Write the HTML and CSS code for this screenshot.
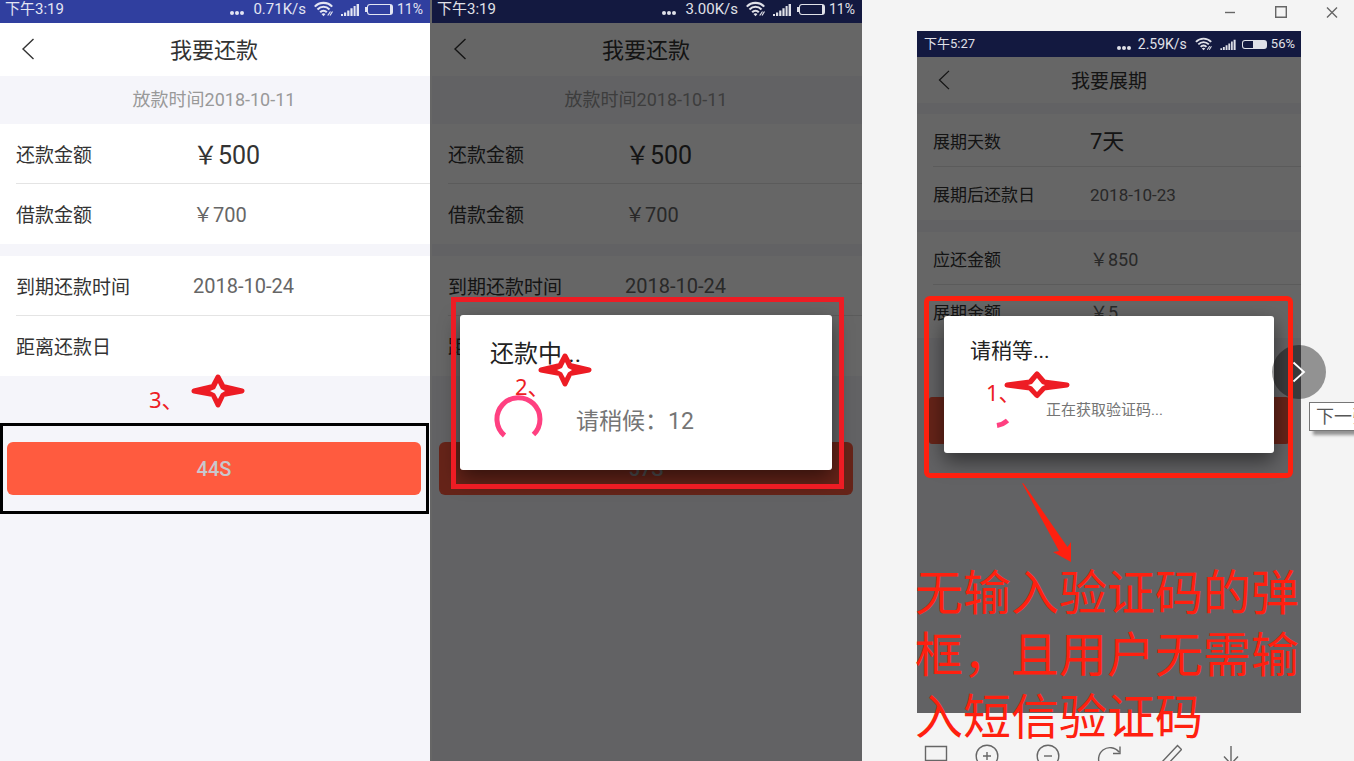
FILE: index.html
```html
<!DOCTYPE html>
<html lang="zh-CN">
<head>
<meta charset="utf-8">
<title>我要还款</title>
<link rel="stylesheet" href="styles.css">
</head>
<body>
<svg class="defs" aria-hidden="true">
  <symbol id="wifi" viewBox="0 0 20 16">
    <g fill="none" stroke="currentColor" stroke-width="2.100">
      <path d="M.8 5.600C5.500 .6 13.500 .6 18.200 5.600"/><path d="M3.500 8.500C7 4.900 12 4.900 15.500 8.500"/><path d="M6.200 11.300C8 9.200 11 9.200 12.800 11.300"/>
    </g>
    <path d="M7.500 13Q9.500 11.500 11.500 13L9.500 15.200Z" fill="currentColor"/>
    <path d="M13.700 14.500L16.500 10.500M16 14.500L18.500 10.500" stroke="currentColor" stroke-width="1.200"/>
  </symbol>
  <symbol id="signal" viewBox="0 0 18 13">
    <path d="M0 13V11H2V13ZM3 13V9.500H5.200V13ZM6.200 13V7.500H8.400V13ZM9.400 13V5.200H11.600V13ZM12.600 13V3H14.600V13ZM15.600 13V1H18V13Z" fill="currentColor"/>
  </symbol>
  <symbol id="back" viewBox="0 0 14 22"><path d="M12.500 1L2 11L12.500 21" fill="none" stroke="currentColor" stroke-width="1.400"/></symbol>
  <symbol id="star" viewBox="0 0 56 34">
    <path d="M28 3L33 12.500L52 17L33 20.500L28 31L23 20.500L4 17L23 12.500Z" fill="#ed1c24" stroke="#ed1c24" stroke-width="5" stroke-linejoin="round"/>
    <path d="M28 9L31 15L35 17L31 19.500L28 25L25 19.500L20 17L25 15Z" fill="var(--star-fill)"/>
  </symbol>
</svg>
<main class="board">
  <section class="phone">
    <div class="status">
      <span>下午3:19</span><span class="dots"><i></i><i></i><i></i></span><span>0.71K/s</span>
      <svg class="wifi"><use href="#wifi"/></svg><svg class="signal"><use href="#signal"/></svg>
      <span class="battery"><i></i></span><span class="percent">11%</span>
    </div>
    <div class="screen">
      <header class="titlebar"><button class="back" aria-label="返回"><svg><use href="#back"/></svg></button><h1>我要还款</h1></header>
      <p class="strip">放款时间2018-10-11</p>
      <dl class="group">
        <div class="row"><dt>还款金额</dt><dd class="big">￥500</dd></div>
        <div class="row"><dt>借款金额</dt><dd>￥700</dd></div>
      </dl>
      <dl class="group">
        <div class="row"><dt>到期还款时间</dt><dd>2018-10-24</dd></div>
        <div class="row"><dt>距离还款日</dt><dd></dd></div>
      </dl>
      <button class="submit">44S</button>
    </div>
    <span class="mark mark-three">3、</span>
    <svg class="star star-three"><use href="#star"/></svg>
    <div class="frame frame-black"></div>
  </section>

  <section class="phone dimmed second">
    <div class="status">
      <span>下午3:19</span><span class="dots"><i></i><i></i><i></i></span><span>3.00K/s</span>
      <svg class="wifi"><use href="#wifi"/></svg><svg class="signal"><use href="#signal"/></svg>
      <span class="battery"><i></i></span><span class="percent">11%</span>
    </div>
    <div class="screen">
      <header class="titlebar"><button class="back" aria-label="返回"><svg><use href="#back"/></svg></button><h1>我要还款</h1></header>
      <p class="strip">放款时间2018-10-11</p>
      <dl class="group">
        <div class="row"><dt>还款金额</dt><dd class="big">￥500</dd></div>
        <div class="row"><dt>借款金额</dt><dd>￥700</dd></div>
      </dl>
      <dl class="group">
        <div class="row"><dt>到期还款时间</dt><dd>2018-10-24</dd></div>
        <div class="row"><dt>距离还款日</dt><dd></dd></div>
      </dl>
      <button class="submit">57S</button>
    </div>
    <div class="dialog" role="dialog" aria-labelledby="paying">
      <h2 id="paying">还款中...</h2>
      <div class="progress">
        <svg class="spinner" viewBox="0 0 50 50"><path d="M10.500 41.500A21.500 21.500 0 1 1 39.500 40.500" fill="none" stroke="#ff4081" stroke-width="5"/></svg>
        <span>请稍候：12</span>
      </div>
    </div>
    <div class="frame frame-red"></div>
    <span class="mark mark-two">2、</span>
    <svg class="star star-two"><use href="#star"/></svg>
  </section>

  <section class="viewer">
    <div class="windowbar">
      <button aria-label="最小化"><svg viewBox="0 0 12 12"><path d="M1 6.500H11"/></svg></button>
      <button aria-label="最大化"><svg viewBox="0 0 12 12"><path d="M.7 .7H11.300V11.300H.7Z"/></svg></button>
      <button aria-label="关闭"><svg viewBox="0 0 12 12"><path d="M1 1.500L11 11.500M11 1.500L1 11.500"/></svg></button>
    </div>
    <div class="phone dimmed compact">
      <div class="status">
        <span>下午5:27</span><span class="dots"><i></i><i></i><i></i></span><span class="speed">2.59K/s</span>
        <svg class="wifi"><use href="#wifi"/></svg><svg class="signal"><use href="#signal"/></svg>
        <span class="battery half"><i></i></span><span class="percent">56%</span>
      </div>
      <div class="screen">
        <header class="titlebar"><button class="back" aria-label="返回"><svg><use href="#back"/></svg></button><h1>我要展期</h1></header>
        <dl class="group">
          <div class="row"><dt>展期天数</dt><dd class="big">7天</dd></div>
          <div class="row"><dt>展期后还款日</dt><dd class="date">2018-10-23</dd></div>
        </dl>
        <dl class="group">
          <div class="row"><dt>应还金额</dt><dd>￥850</dd></div>
          <div class="row"><dt>展期金额</dt><dd>￥5</dd></div>
        </dl>
        <button class="submit" aria-label="提交"></button>
      </div>
      <div class="dialog" role="dialog" aria-labelledby="waiting">
        <h2 id="waiting">请稍等...</h2>
        <div class="progress">
          <svg class="spinner" viewBox="0 0 44 44"><path d="M26 39.500Q32 38.500 36.500 34.500" fill="none" stroke="#ff4081" stroke-width="5"/></svg>
          <span>正在获取验证码...</span>
        </div>
      </div>
      <button class="next" aria-label="下一张"><svg viewBox="0 0 14 22"><path d="M1.500 1.500L12 11L1.500 20.500" fill="none" stroke="#fff" stroke-width="1.800"/></svg></button>
      <div class="frame frame-round"></div>
      <span class="mark mark-one">1、</span>
      <svg class="star-one" viewBox="0 0 66 28">
        <path d="M33 3L40 11L63 14L40 17L33 24.500L26 17L3 14L26 11Z" fill="#ed1c24" stroke="#ed1c24" stroke-width="5" stroke-linejoin="round"/>
        <path d="M33 7L38 13L41 14L38 15.500L33 21L28 15.500L24 14L28 13Z" fill="#fff"/>
      </svg>
      <svg class="arrow" viewBox="0 0 52 80"><path d="M1 0L2.500 .5L46.500 64L50 59V79L32 69L38 68Z" fill="#ff200f"/></svg>
      <p class="caption">无输入验证码的弹框，且用户无需输入短信验证码</p>
      <span class="tooltip">下一张</span>
    </div>
    <div class="toolbar">
      <button aria-label="实际大小"><svg viewBox="0 0 24 24"><path d="M1.500 2.500H22.500V16.500H1.500Z"/></svg></button>
      <div class="tools">
        <button aria-label="放大"><svg viewBox="0 0 24 24"><circle cx="12" cy="12" r="10.800"/><path d="M8 12H16M12 8V16"/></svg></button>
        <button aria-label="缩小"><svg viewBox="0 0 24 24"><circle cx="12" cy="12" r="10.800"/><path d="M8 12H16"/></svg></button>
        <button aria-label="旋转"><svg viewBox="0 0 24 24"><path d="M4 22A10.500 10.500 0 0 1 22 8M23 2.500V9.500H16"/></svg></button>
        <button aria-label="编辑"><svg viewBox="0 0 24 24"><path d="M4 18L19.500 1.500L23.500 5.500L8 22L2 24Z"/></svg></button>
        <button aria-label="下载"><svg viewBox="0 0 24 24"><path d="M12 2V20M5 12.500L12 20L19 12.500"/></svg></button>
      </div>
    </div>
  </section>
</main>
</body>
</html>
```
FILE: styles.css
```css
* { box-sizing: border-box; }
body { margin: 0; font-family: Roboto, "Noto Sans CJK SC", sans-serif; color: #333; }
h1, h2, p, dl, dd { margin: 0; font-weight: 400; }
button { border: 0; padding: 0; background: none; font-family: inherit; color: inherit; }
svg { display: block; }
.defs { position: absolute; width: 0; height: 0; }

.board {
  display: grid;
  grid-template-columns: 430fr 432fr 492fr;
  height: 100vh;
  overflow: hidden;
}

/* Phone */
.phone {
  --label: 19px;
  --value: 20px;
  --big: 25px;
  --title: 22px;
  --row: 60px;
  --label-width: 177px;
  --star-fill: #f5f5fa;
  position: relative;
  display: flex;
  flex-direction: column;
  min-width: 0;
}
.status {
  display: flex;
  align-items: center;
  height: 23px;
  padding: 0 7px 5px 5px;
  background: #303f9f;
  color: #e3e5f3;
  font-size: 15px;
  line-height: 18px;
}
.dots { display: flex; gap: 1px; margin: 7px 9px 0 auto; }
.dots i { width: 4px; height: 4px; border-radius: 50%; background: currentColor; }
.wifi { width: 20px; height: 16px; margin-left: 8px; }
.signal { width: 18px; height: 13px; margin-left: 7px; }
.battery {
  position: relative;
  width: 26px;
  height: 11px;
  margin: 0 4px 0 8px;
  border: 1px solid currentColor;
  border-right-width: 3px;
  border-radius: 3px;
}
.battery i { position: absolute; left: -3px; top: 2px; width: 2px; height: 5px; background: currentColor; }
.half i { left: 10px; top: 0; width: 13px; height: 100%; }
.percent { font-size: 14px; }
.screen { position: relative; flex: 1; background: #f5f5fa; }
.titlebar {
  position: relative;
  display: grid;
  place-items: center;
  height: 53px;
  padding: 2px 2px 0 0;
  background: #fff;
}
.titlebar h1 { font-size: var(--title); line-height: 32px; }
.back { position: absolute; left: 21px; top: 15px; }
.back svg { width: 14px; height: 22px; }
.strip { padding-right: 2px; color: #999; font-size: 18px; line-height: 48px; text-align: center; }
.group { background: #fff; }
.group + .group { margin-top: 12px; }
.row {
  display: flex;
  align-items: center;
  height: var(--row);
  margin-left: 16px;
  border-bottom: 1px solid #e4e4e4;
}
.row:last-child { border-bottom-color: transparent; }
.row dt { width: var(--label-width); font-size: var(--label); }
.row dd { color: #666; font-size: var(--value); }
.row .big { padding-bottom: 2px; color: #333; font-size: var(--big); }
.submit {
  display: block;
  width: calc(100% - 16px);
  height: 53px;
  margin: 66px 9px 0 7px;
  border-radius: 6px;
  background: #ff5b3f;
  color: #c8c8cc;
  font-size: 20px;
  font-weight: 500;
}
.dimmed .status { background: #131940; color: #e0e1e8; }
.dimmed .screen::after { content: ""; position: absolute; inset: 0; background: rgba(0, 0, 0, .6); }
.second { border-left: 2px solid #666; --star-fill: #fff; }

/* Dialog */
.dialog {
  position: absolute;
  top: 315px;
  left: 28px;
  right: 30px;
  height: 155px;
  padding: 22px 30px;
  border-radius: 3px;
  background: #fff;
  color: #222;
  box-shadow: 0 8px 20px rgba(0, 0, 0, .5);
}
.dialog h2 { font-size: 24px; line-height: 34px; }
.progress { display: flex; align-items: center; gap: 32px; margin-top: 23px; padding-left: 4px; color: #757575; font-size: 23px; }
.spinner { width: 50px; height: 50px; }

/* Annotations */
.frame { position: absolute; pointer-events: none; }
.frame-black { top: 423px; left: 0; right: 1px; height: 91px; border: 3px solid #000; }
.frame-red { top: 297px; left: 19px; right: 18px; height: 192px; border: 5px solid #ed1c24; }
.frame-round { top: 265px; left: 7px; right: 8px; height: 182px; border: 5px solid #ff200f; border-radius: 6px; }
.mark { position: absolute; color: #ed1c24; font-family: "Noto Sans", "Noto Sans CJK SC", sans-serif; font-size: 22px; line-height: 30px; }
.mark-three { left: 149px; top: 384px; }
.mark-two { left: 83px; top: 371px; }
.mark-one { left: 69px; top: 346px; }
.star { position: absolute; width: 56px; height: 34px; }
.star-three { left: 190px; top: 374px; }
.star-two { left: 105px; top: 353px; }
.star-one { position: absolute; left: 87px; top: 340px; width: 66px; height: 28px; }
.arrow { position: absolute; left: 104px; top: 452px; width: 52px; height: 80px; }
.caption { position: absolute; left: -2px; top: 532px; width: 8em; color: #ff200f; font-size: 48px; line-height: 62px; }

/* Picture viewer */
.viewer { display: flex; flex-direction: column; overflow: hidden; padding: 0 53px 0 55px; background: #f4f4f4; }
.windowbar { display: flex; justify-content: flex-end; gap: 39px; height: 31px; margin-right: -37px; padding-top: 6px; }
.windowbar svg { width: 12px; height: 12px; fill: none; stroke: #666; stroke-width: 1.400; }
.windowbar button { height: 12px; }
.compact {
  --label: 17px;
  --value: 18px;
  --big: 22px;
  --title: 19px;
  --row: 53px;
  --label-width: 157px;
  flex: 1;
}
.compact .status { height: 26px; padding: 0 6px 0 7px; font-size: 13px; }
.compact .speed { font-size: 14px; }
.compact .dots { margin-right: 7px; }
.compact .wifi { width: 18px; height: 14px; }
.compact .signal { width: 16px; height: 11px; }
.compact .battery { width: 25px; height: 9px; margin: 0 4px 0 6px; }
.compact .percent { font-size: 13px; }
.compact .titlebar { height: 46px; margin-bottom: 11px; padding: 3px 0 0; }
.compact .back { left: 20px; top: 13px; }
.compact .back svg { height: 20px; }
.compact .date { padding-top: 3px; font-size: 17px; }
.compact .submit { width: calc(100% - 24px); height: 47px; margin: 59px 12px 0; border-radius: 3px; }
.compact .dialog { top: 285px; left: 27px; right: 27px; height: 137px; padding: 20px 26px; }
.compact .dialog h2 { font-size: 21px; line-height: 30px; }
.compact .progress { gap: 31px; margin-top: 20px; padding: 0 0 0 1px; font-size: 15px; }
.compact .spinner { width: 44px; height: 44px; }
.next {
  position: absolute;
  top: 314px;
  right: -25px;
  display: grid;
  place-items: center;
  width: 54px;
  height: 54px;
  border-radius: 50%;
  background: rgba(0, 0, 0, .4);
}
.next svg { width: 14px; height: 22px; }
.tooltip {
  position: absolute;
  left: calc(100% + 8px);
  top: 371px;
  padding: 0 6px;
  border: 1px solid #767676;
  background: #fff;
  color: #575757;
  font-size: 18px;
  line-height: 27px;
  white-space: nowrap;
  box-shadow: 4px 4px 3px rgba(0, 0, 0, .4);
}
.toolbar { display: flex; gap: 27px; height: 48px; padding: 31px 0 0 7px; }
.tools { display: flex; gap: 37px; }
.toolbar svg { width: 24px; height: 24px; fill: none; stroke: #666; stroke-width: 1.400; }
.toolbar button { height: 24px; }
```
